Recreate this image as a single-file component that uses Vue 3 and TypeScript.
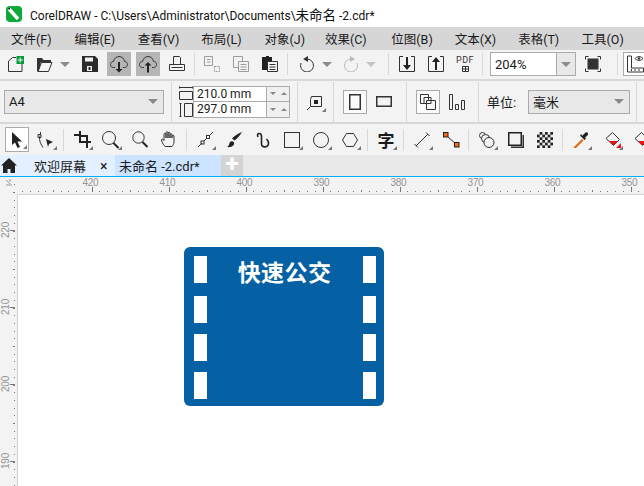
<script setup lang="ts">
const menus: string[] = ['文件(F)', '编辑(E)', '查看(V)', '布局(L)', '对象(J)', '效果(C)', '位图(B)', '文本(X)', '表格(T)', '工具(O)']
const hLabels = [420, 410, 400, 390, 380, 370, 360, 350].map((v, i) => ({ v, x: 91.5 + i * 77 }))
const vLabels = [220, 210, 200, 190].map((v, i) => ({ v, y: 53 + i * 77 }))
const hTicks = Array.from({ length: 84 }, (_, i) => ({ x: 14.5 + (i * 77) / 10, mid: i % 5 === 0 })).filter((t) => t.x > 20)
const vTicks = Array.from({ length: 40 }, (_, i) => ({ y: 7.3 + (i * 77) / 10, mid: (i + 4) % 5 === 0 }))
const checker = Array.from({ length: 36 }, (_, i) => ({ x: (i % 6) * 2.67, y: Math.floor(i / 6) * 2.67, on: (i + Math.floor(i / 6)) % 2 === 0 }))
</script>

<template>
  <div class="app">
    <header class="title">
      <svg class="logo" width="16" height="16" viewBox="0 0 16 16">
        <rect width="16" height="16" rx="4" fill="#0fa83a" />
        <path d="M3 3L12 13" stroke="#fff" stroke-width="3.4" />
        <path d="M2 2l2 0 0 2z" fill="#111" />
      </svg>
      <span>CorelDRAW - C:\Users\Administrator\Documents\<span class="title-cjk">未命名</span> -2.cdr*</span>
    </header>

    <nav class="menu">
      <span v-for="m in menus" :key="m" class="menu-item">{{ m }}</span>
    </nav>

    <div class="bar bar1">
      <div class="cell">
        <svg width="16" height="16" viewBox="0 0 16 16"><path class="ln" d="M.5 15.500V5L4.500 1.500H8M14 8v7.500H.5" /><rect x="8.500" y="0" width="7.500" height="8" fill="#0b9a3c" /><path d="M12.200 1.500v5M9.800 4h5" stroke="#fff" /></svg>
      </div>
      <div class="cell">
        <svg width="16" height="16" viewBox="0 0 16 16"><path d="M0 2h5l1.500 2H14v2H4L2 14H0z" fill="#333" /><path class="ln" d="M.5 15.500V2.500M1 15.500h10.500L15 6.500H4.500z" /></svg>
      </div>
      <div class="arrow-cell"><i class="caret"></i></div>
      <div class="cell m3">
        <svg width="16" height="16" viewBox="0 0 16 16"><path d="M0 0h13l3 3v13H0z" fill="#2b2b2b" /><rect x="3" y="1.500" width="8" height="4" fill="#f3f3f3" /><rect x="5" y="10" width="5" height="5" fill="#f3f3f3" /><rect x="6.500" y="11" width="2" height="3" fill="#2b2b2b" /></svg>
      </div>
      <div class="cell on">
        <svg width="18" height="18" viewBox="0 0 18 18"><path class="ln" d="M5 12.500H3.500C1.500 12.500.5 11 .5 9.500S1.500 6.500 3.500 6.500C4 3.500 6.500 1.500 9 1.500c3 0 5 2 5.500 5 2 0 3 1.500 3 3s-1 3-3 3H13" /><path d="M8 7h2v7h2.500L9 17.500 5.500 14H8z" fill="#222" /></svg>
      </div>
      <div class="cell on">
        <svg width="18" height="18" viewBox="0 0 18 18"><path class="ln" d="M5 12.500H3.500C1.500 12.500.5 11 .5 9.500S1.500 6.500 3.500 6.500C4 3.500 6.500 1.500 9 1.500c3 0 5 2 5.500 5 2 0 3 1.500 3 3s-1 3-3 3H13" /><path d="M8 17.500h2v-7h2.500L9 7 5.500 10.500H8z" fill="#222" /></svg>
      </div>
      <div class="cell">
        <svg width="16" height="16" viewBox="0 0 16 16"><path class="ln" d="M4.500 8.500V.5h6l1 1v7M.5 8.500h15v6H.5zM2.500 11.500h11" /></svg>
      </div>
      <i class="sep"></i>
      <div class="cell">
        <svg class="dim" width="16" height="16" viewBox="0 0 16 16"><path class="ln" d="M.5.5h8v9h-8zM3 3.500h3.500M3 6h3.500" /><path class="ln dash" d="M10.500 10.500h5v5h-5z" /></svg>
      </div>
      <div class="cell">
        <svg class="dim" width="16" height="16" viewBox="0 0 16 16"><path class="ln" d="M.5.5h9v11h-9z" /><path class="ln fillbg" d="M5.500 5.500h10v10h-10zM7.500 8.500h6M7.500 11h6M7.500 13.500h6" /></svg>
      </div>
      <div class="cell">
        <svg width="16" height="16" viewBox="0 0 16 16"><path d="M0 1h4V0h3v1h3v13H0z" fill="#222" /><path class="ln fillw" d="M5.500 5.500h10v10h-10zM7.500 8.500h6M7.500 11h6M7.500 13.500h6" /></svg>
      </div>
      <i class="sep"></i>
      <div class="cell m2">
        <svg width="16" height="16" viewBox="0 0 16 16"><path class="ln" d="M8 3a6.500 6.500 0 1 1-6 4" /><path d="M9 0v6L4 3z" fill="#333" /></svg>
      </div>
      <div class="arrow-cell a2"><i class="caret"></i></div>
      <div class="cell">
        <svg class="dim2" width="16" height="16" viewBox="0 0 16 16"><path class="ln" d="M8 3a6.500 6.500 0 1 0 6 4" /><path d="M7 0v6l5-3z" fill="#333" /></svg>
      </div>
      <div class="arrow-cell a2"><i class="caret light"></i></div>
      <i class="sep s3"></i>
      <div class="cell m1">
        <svg width="16" height="16" viewBox="0 0 16 16"><path class="ln" d="M4 .5H.5v15h15V.5H12" /><path d="M7 1h2v8h3l-4 5-4-5h3z" fill="#222" /></svg>
      </div>
      <div class="cell">
        <svg width="16" height="16" viewBox="0 0 16 16"><path class="ln" d="M4 .5H.5v15h15V.5H12" /><path d="M7 14h2V6h3L8 1 4 6h3z" fill="#222" /></svg>
      </div>
      <div class="cell pdf">
        <span>PDF</span>
        <svg width="7" height="6" viewBox="0 0 7 6"><path class="ln" d="M.5.5h6v5h-6zM3.500.5v5M.5 3h6" /></svg>
      </div>
      <i class="sep"></i>
      <div class="zoom-box">
        <span class="zoom-val">204%</span>
        <span class="zoom-btn"><i class="caret"></i></span>
      </div>
      <div class="cell">
        <svg width="16" height="16" viewBox="0 0 16 16"><rect x="2.500" y="2.500" width="11" height="11" fill="#333" /><path class="ln" d="M.5 3.500v-3h3M12.500.5h3v3M15.500 12.500v3h-3M3.500 15.500h-3v-3" /></svg>
      </div>
      <i class="sep s4"></i>
      <div class="opt-btn">
        <svg width="18" height="18" viewBox="0 0 18 18"><path class="ln" d="M.5 1v16h16v-4H4.500V1zM4.500 16v-2M8 16v-2M12 16v-2" /><path class="ln" d="M8 3.500c2-2.500 6-2.500 8 0-2 2.500-6 2.500-8 0z" /><circle cx="12" cy="3.500" r="1.200" fill="#333" /></svg>
      </div>
    </div>

    <div class="bar bar2">
      <div class="combo page-combo"><span>A4</span><i class="caret"></i></div>
      <i class="sep"></i>
      <div class="size-icons">
        <svg width="14" height="14" viewBox="0 0 14 14"><path class="ln" d="M.5 5.500h13v8H.5zM.5 1.500h13M.5.5v2M13.500.5v2" /></svg>
        <svg width="14" height="14" viewBox="0 0 14 14"><path class="ln" d="M5.500.5h8v13h-8zM1.500.5v13M.5.5h2M.5 13.500h2" /></svg>
      </div>
      <div class="size-box">
        <div class="size-row"><span class="size-val">210.0 mm</span><span class="spin"><i class="tri down"></i><i class="tri up"></i></span></div>
        <div class="size-row"><span class="size-val">297.0 mm</span><span class="spin"><i class="tri down"></i><i class="tri up"></i></span></div>
      </div>
      <i class="sep s5"></i>
      <div class="cell fly">
        <svg width="16" height="16" viewBox="0 0 16 16"><path class="ln" d="M4.500 2.500h10v10h-11v-7zM0 16l3-3" /><rect x="7" y="6" width="4" height="4" fill="#222" /></svg>
      </div>
      <i class="sep s6"></i>
      <div class="btn-box">
        <svg width="12" height="16" viewBox="0 0 12 16"><rect x=".75" y=".75" width="10.500" height="14.500" fill="none" stroke="#333" stroke-width="1.500" /></svg>
      </div>
      <div class="cell">
        <svg width="16" height="11" viewBox="0 0 16 11"><rect x=".75" y=".75" width="14.500" height="9.500" fill="none" stroke="#333" stroke-width="1.500" /></svg>
      </div>
      <i class="sep s6b"></i>
      <div class="btn-box">
        <svg width="16" height="16" viewBox="0 0 16 16"><path class="ln" d="M.5.5h8v9h-8z" /><path class="ln fillw" d="M6.500 6.500h9v9h-9z" /><path class="ln" d="M4 3.500h7v6H4z" /></svg>
      </div>
      <div class="cell">
        <svg width="16" height="16" viewBox="0 0 16 16"><path class="ln" d="M.5.5h3v15h-3zM6.500 10.500h3v5h-3zM12.500 6.500h3v9h-3z" /></svg>
      </div>
      <i class="sep s8"></i>
      <span class="unit">单位:</span>
      <div class="combo unit-combo"><span>毫米</span><i class="caret"></i></div>
      <i class="sep s9"></i>
    </div>

    <div class="bar bar3">
      <div class="tool-sel fly">
        <svg width="12" height="16" viewBox="0 0 12 16"><path d="M1 0v13l3-2.500L6.500 16 9 15l-2.500-5.500H11z" fill="#222" /></svg>
      </div>
      <div class="cell fly">
        <svg width="18" height="18" viewBox="0 0 18 18"><path class="ln" d="M3 4.500c-1 3-.5 7 3 12M3.500 1v2M1 3.500h3v3H1z" /><path d="M9 8l7 3-4 2-1 3z" fill="#222" /></svg>
      </div>
      <i class="sep"></i>
      <div class="cell fly">
        <svg width="17" height="17" viewBox="0 0 17 17"><path d="M5 0v3H0v2h5v7h7v5h2v-5h3v-2h-3V4H7V0zM7 6h5v4H7z" fill="#222" /></svg>
      </div>
      <div class="cell fly">
        <svg width="18" height="18" viewBox="0 0 18 18"><circle cx="7" cy="7" r="6.500" class="ln" /><path d="M11.500 12l5 5" stroke="#222" stroke-width="2" /></svg>
      </div>
      <div class="cell">
        <svg width="17" height="17" viewBox="0 0 17 17"><circle cx="6.500" cy="6.500" r="5.700" class="ln" /><path d="M10.500 11l5 5" stroke="#222" stroke-width="2" /></svg>
      </div>
      <div class="cell">
        <svg width="16" height="17" viewBox="0 0 16 17"><path class="ln" d="M4 15.500C2 13 .5 11 .5 8.500c.5-1 2 0 2.500 1V3c0-1 2-1 2 0v4-5.500c0-1 2-1 2 0V7 2c0-1 2-1 2 0v5-3.500c0-1 2-1 2 0V7 5c0-1 2-1 2 0v6c0 2-1 3-2 4.500z" /></svg>
      </div>
      <i class="sep"></i>
      <div class="cell fly">
        <svg width="17" height="17" viewBox="0 0 17 17"><path class="ln" d="M1 16l4-4M7 10l3-3M12 5l4-4" /><rect x="4" y="10" width="3" height="3" class="ln" /><rect x="9.500" y="4.500" width="3" height="3" class="ln" /></svg>
      </div>
      <div class="cell">
        <svg width="16" height="16" viewBox="0 0 16 16"><path d="M16 0c-1 2-4 6-7.500 8.500L6 6.500C9 3.500 13 1 16 0zM1 15c2-.5 2-3 3-5 1-1 2-1 3-.5s1.500 2 1 3c-1 2-4 3-7 2.500z" fill="#222" /></svg>
      </div>
      <div class="cell">
        <svg width="16" height="16" viewBox="0 0 16 16"><path class="ln tk" d="M3 5C1 1 6 0 6.500 4v8c0 4 7 4 7-1 0-2-1-3-2-4" /></svg>
      </div>
      <div class="cell fly">
        <svg width="16" height="16" viewBox="0 0 16 16"><rect x=".5" y=".5" width="15" height="15" class="ln" /></svg>
      </div>
      <div class="cell fly">
        <svg width="16" height="16" viewBox="0 0 16 16"><circle cx="8" cy="8" r="7.500" class="ln" /></svg>
      </div>
      <div class="cell fly">
        <svg width="16" height="14" viewBox="0 0 16 14"><path class="ln" d="M4.500.5h7l4 6.500-4 6.500h-7L.5 7z" /></svg>
      </div>
      <i class="sep"></i>
      <div class="cell zi fly">字</div>
      <i class="sep"></i>
      <div class="cell fly">
        <svg width="16" height="16" viewBox="0 0 16 16"><path class="ln" d="M2 14L14 2M.5 12l3.500 3.500M12 .5L15.500 4" /></svg>
      </div>
      <div class="cell">
        <svg width="17" height="16" viewBox="0 0 17 16"><path class="ln" d="M3 3l11 10" /><rect x=".5" y=".5" width="4.500" height="4.500" fill="#f26a11" stroke="#222" /><rect x="11.500" y="10.500" width="4.500" height="4.500" fill="#f26a11" stroke="#222" /></svg>
      </div>
      <i class="sep"></i>
      <div class="cell fly">
        <svg width="16" height="16" viewBox="0 0 16 16"><circle cx="3.500" cy="3.500" r="3" class="ln" /><circle cx="6.500" cy="6.500" r="4" class="ln fillbg" /><circle cx="10" cy="10.500" r="5" class="ln fillbg" /></svg>
      </div>
      <div class="cell">
        <svg width="16" height="16" viewBox="0 0 16 16"><rect x=".75" y=".75" width="12.500" height="12.500" fill="none" stroke="#222" stroke-width="1.500" /><path d="M14.500 3H16v13H3v-1.500h11.500z" fill="#333" /></svg>
      </div>
      <div class="cell">
        <svg width="16" height="16" viewBox="0 0 16 16"><rect width="16" height="16" fill="#222" /><rect v-for="(c, i) in checker" v-show="c.on" :key="i" :x="c.x" :y="c.y" width="2.670" height="2.670" fill="#eee" /></svg>
      </div>
      <i class="sep"></i>
      <div class="cell fly">
        <svg width="16" height="16" viewBox="0 0 16 16"><path d="M1 15l8-8 1.500 1.500-8 8-2.500 0z" fill="#e06a14" /><path d="M9 4l3-3c1-1 3-1 3 1 0 1-.5 1.500-3 3.500l1 1-1.500 1.500L7 3.500 8.500 2z" fill="#222" /></svg>
      </div>
      <div class="cell fly m2">
        <svg width="17" height="17" viewBox="0 0 17 17"><path class="ln fillw" d="M8.500 1.500l7 7-6 6-7.500-7z" /><path d="M5 10h9l-4.500 4.500z" fill="#e8141c" /><path d="M12 17l5-5v5z" fill="#e8141c" /></svg>
      </div>
      <div class="cell">
        <svg width="17" height="17" viewBox="0 0 17 17"><path class="ln fillw" d="M8.500 1.500l7 7-6 6-7.500-7z" /><path d="M5 10h9l-4.500 4.500z" fill="#e8141c" /></svg>
      </div>
    </div>

    <div class="tabs">
      <div class="tab-home">
        <svg width="16" height="15" viewBox="0 0 16 15"><path d="M8 0l8 7.500h-2V15H9.500v-4h-3v4H2V7.500H0z" fill="#222" /></svg>
        <span class="tab-label">欢迎屏幕</span>
        <span class="tab-close">×</span>
      </div>
      <div class="tab-doc">未命名 -2.cdr*</div>
      <div class="tab-add">+</div>
    </div>

    <div class="work">
      <svg class="ruler-svg" width="644" height="309" viewBox="0 0 644 309">
        <g fill="#949494" font-size="10" letter-spacing="-.3">
          <text v-for="l in hLabels" :key="l.v" :x="l.x - 1" y="9" text-anchor="middle">{{ l.v }}</text>
          <text v-for="l in vLabels" :key="l.v" transform="rotate(-90)" :x="-l.y" :y="9" text-anchor="middle">{{ l.v }}</text>
        </g>
        <path d="M6 3l4 4M10 2v3M6 8h6" stroke="#999" fill="none" />
        <g fill="#777">
          <rect v-for="(t, i) in hTicks" :key="i" :x="Math.round(t.x)" :y="t.mid ? 13 : 14" width="1" :height="t.mid ? 2 : 1" />
          <rect v-for="(t, i) in vTicks" :key="i" :x="t.mid ? 13 : 14" :y="Math.round(t.y)" :width="t.mid ? 2 : 1" height="1" />
          <rect v-for="l in hLabels" :key="l.v" :x="Math.round(l.x)" y="10" width="1" height="5" />
          <rect v-for="l in vLabels" :key="l.v" x="10" :y="l.y" width="5" height="1" />
        </g>
      </svg>
      <main class="canvas">
        <section class="sign">
          <div class="strip"><i></i><i></i><i></i><i></i></div>
          <h1 class="sign-title">快速公交</h1>
          <div class="strip"><i></i><i></i><i></i><i></i></div>
        </section>
      </main>
    </div>
  </div>
</template>

<style scoped>
.app { width: 644px; height: 486px; overflow: hidden; background: #f3f3f3; font-family: Roboto, "Noto Sans CJK SC", sans-serif; color: #1a1a1a; display: flex; flex-direction: column; }
.title { height: 27px; background: #fff; display: flex; align-items: center; padding-left: 6px; gap: 8px; font-size: 12px; color: #111; box-sizing: border-box; flex: none; }
.title-cjk { font-size: 13.500px; }
.logo { flex: none; }
.menu { height: 23px; background: #d6d6d6; display: flex; padding-left: 11px; gap: 20.400px; align-items: center; font-size: 12.500px; flex: none; }
.menu-item { white-space: nowrap; width: 43px; }
.menu-item:nth-child(6) { margin-left: -3px; margin-right: 3px; }
.bar { display: flex; align-items: center; flex: none; box-sizing: border-box; border-bottom: 2px solid #d8d8d8; gap: 5px; }
.bar1 { height: 31px; padding: 0 0 1px 4px; }
.bar2 { height: 43px; padding: 0 0 0 4px; }
.bar3 { height: 31px; padding: 0 0 0 5px; border-bottom: 0; }
.cell { width: 24px; height: 24px; display: flex; align-items: center; justify-content: center; flex: none; position: relative; }
.cell.on { background: #b5b5b5; }
.m1 { margin-left: 1px; }
.m2 { margin-left: 2px; }
.m3 { margin-left: 3px; }
.bar3 .sep + .cell { margin-left: 1px; }
.arrow-cell { width: 10px; height: 24px; display: flex; align-items: center; justify-content: center; margin-left: -2px; flex: none; }
.a2 { margin-left: -2px; margin-right: 2px; }
.caret { display: block; width: 0; height: 0; border-left: 5px solid transparent; border-right: 5px solid transparent; border-top: 5px solid #8a8a8a; }
.caret.light { border-top-color: #c4c4c4; }
.sep { display: block; width: 1px; height: 22px; background: #d8d8d8; flex: none; }
.bar2 .sep { height: 40px; }
.bar3 .sep { height: 22px; }
.s3 { margin-left: 5px; }
.s4 { margin-left: 7px; }
.s5 { margin-left: 2px; }
.s6 { margin-left: 1px; margin-right: 4px; }
.s6b { margin-left: 5px; margin-right: 4px; }
.s8 { margin-left: 4px; }
.s9 { margin-left: 1px; }
.dim { opacity: .45; }
.dim2 { opacity: .3; }
svg { display: block; }
.ln { fill: none; stroke: #333; stroke-width: 1; }
.ln.tk { stroke-width: 1.6; stroke: #222; }
.ln.dash { stroke-dasharray: 2 1; }
.ln.fillbg { fill: #f3f3f3; }
.ln.fillw { fill: #f3f3f3; }
.pdf { flex-direction: column; font-size: 9px; line-height: 9px; letter-spacing: .5px; color: #333; gap: 1px; }
.zoom-box { width: 86px; height: 24px; border: 1px solid #ababab; background: #fff; box-sizing: border-box; display: flex; align-items: center; margin-left: 2px; flex: none; }
.zoom-val { flex: 1; padding-left: 4px; font-size: 13px; }
.zoom-btn { width: 18px; height: 22px; background: #e8e8e8; border-left: 1px solid #ababab; display: flex; align-items: center; justify-content: center; }
.opt-btn { width: 30px; height: 24px; border: 1px solid #ababab; background: #fff; box-sizing: border-box; display: flex; align-items: center; padding-left: 3px; flex: none; }
.combo { height: 24px; background: #e8e8e8; border: 1px solid #ababab; box-sizing: border-box; display: flex; align-items: center; justify-content: space-between; padding: 0 5px 0 4px; font-size: 13px; flex: none; }
.page-combo { width: 160px; margin-right: 2px; }
.unit-combo { width: 102px; }
.size-icons { display: flex; flex-direction: column; gap: 3px; margin-left: 2px; flex: none; }
.size-box { width: 97px; height: 32px; border: 1px solid #ababab; box-sizing: border-box; background: #fff; margin-left: -5px; flex: none; display: flex; flex-direction: column; }
.size-row { flex: 1; display: flex; align-items: center; font-size: 12px; line-height: 14px; }
.size-row + .size-row { border-top: 1px solid #ababab; }
.size-val { width: 72px; padding-left: 3px; box-sizing: border-box; }
.spin { flex: 1; align-self: stretch; background: #f0f0f0; border-left: 1px solid #ababab; display: flex; align-items: center; justify-content: space-around; }
.tri { width: 0; height: 0; border-left: 3px solid transparent; border-right: 3px solid transparent; }
.tri.down { border-top: 3px solid #888; }
.tri.up { border-bottom: 3px solid #888; }
.btn-box { width: 24px; height: 24px; border: 1px solid #ababab; background: #fbfbfb; box-sizing: border-box; display: flex; align-items: center; justify-content: center; flex: none; }
.unit { font-size: 13px; margin-left: 3px; width: 36px; white-space: nowrap; flex: none; }
.tool-sel { width: 24px; height: 25px; border: 1px solid #ababab; background: #fff; box-sizing: border-box; display: flex; align-items: center; justify-content: center; position: relative; flex: none; }
.fly::after { content: ""; position: absolute; right: 1px; bottom: 2px; border-left: 4px solid transparent; border-bottom: 4px solid #777; }
.zi { font-size: 17px; font-weight: 700; font-family: "Noto Sans CJK SC", sans-serif; }
.tabs { height: 22px; flex: none; background: #e8e8e8; border-bottom: 1px solid #00aeff; box-sizing: border-box; display: flex; align-items: stretch; }
.tab-home { width: 115px; background: #e2f0ff; display: flex; align-items: center; padding-left: 1px; box-sizing: border-box; flex: none; font-size: 13px; }
.tab-label { margin-left: 17px; width: 52px; white-space: nowrap; }
.tab-close { margin-left: 14px; font-size: 14px; }
.tab-doc { width: 106px; background: #cce4ff; display: flex; align-items: center; padding-left: 4px; box-sizing: border-box; font-size: 13px; flex: none; white-space: nowrap; }
.tab-add { width: 22px; background: #d4d4d4; color: #fff; font-size: 24px; font-weight: 700; line-height: 19px; text-align: center; flex: none; }
.work { flex: 1; position: relative; min-height: 0; display: flex; flex-direction: column; padding: 17px 0 0 17px; }
.ruler-svg { position: absolute; left: 0; top: 0; font-family: "Liberation Sans", sans-serif; }
.canvas { flex: 1; background: #fff; border-top: 1px solid #d4d4d4; border-left: 1px solid #d4d4d4; padding: 52px 0 0 166px; position: relative; }
.sign { width: 200px; height: 159px; background: #0561a4; border-radius: 6px; display: flex; justify-content: space-between; padding: 9px 8px 7px 10px; box-sizing: border-box; }
.strip { display: flex; flex-direction: column; width: 13px; }
.strip i { display: block; flex: none; width: 13px; height: 27px; background: #fff; margin-bottom: 11px; }
.strip i:first-child { margin-bottom: 13px; }
.sign-title { margin: -1px 0 0 -1px; color: #fff; font-size: 23px; line-height: 32px; font-weight: 700; font-family: "Noto Sans CJK SC", sans-serif; letter-spacing: .4px; white-space: nowrap; }
</style>
